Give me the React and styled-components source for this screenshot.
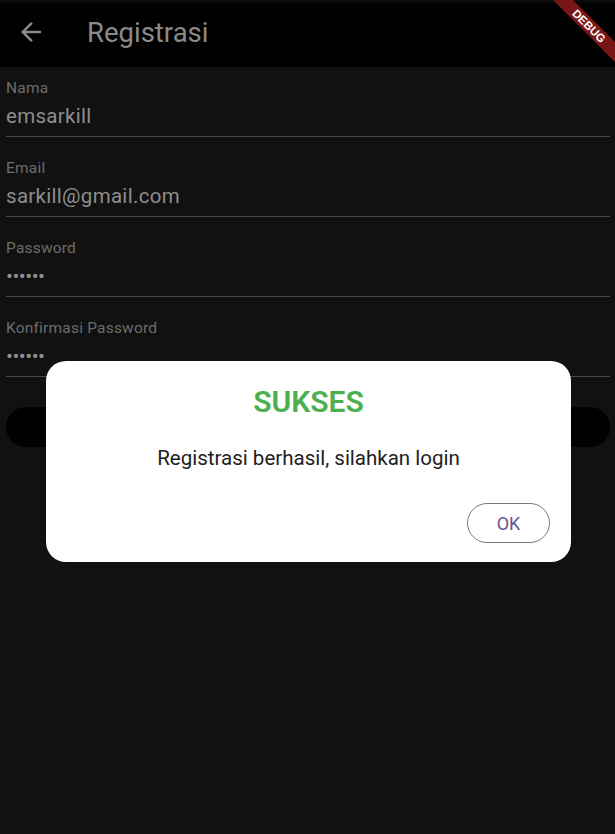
import React from "react";
import styled, { createGlobalStyle } from "styled-components";

const GlobalStyle = createGlobalStyle`
  html, body {
    margin: 0;
    padding: 0;
    background: #111111;
  }
  * {
    box-sizing: border-box;
  }
`;

const Screen = styled.div`
  position: relative;
  width: 615px;
  height: 834px;
  overflow: hidden;
  background: #111111;
  font-family: Roboto, "Liberation Sans", sans-serif;
`;

const AppBar = styled.header`
  display: flex;
  align-items: center;
  height: 67px;
  padding: 0 0 6px 16px;
  background: #010101;
  border-top: 3px solid #0b0b0b;
`;

const BackButton = styled.div`
  display: flex;
  width: 30px;
  height: 30px;
  color: #8a8a8a;
`;

const Title = styled.h1`
  margin: 0 0 0 41px;
  font-size: 27.5px;
  font-weight: 400;
  color: #8a8a8a;
`;

const Form = styled.div`
  display: flex;
  flex-direction: column;
  padding: 12px 5px 0 6px;
`;

const Field = styled.div`
  display: flex;
  flex-direction: column;
  margin-bottom: 22px;
`;

const Label = styled.div`
  font-size: 15.5px;
  line-height: 18px;
  letter-spacing: 0.2px;
  color: #6c6c6c;
`;

const Value = styled.div`
  margin-top: 7px;
  height: 33px;
  padding-bottom: 8px;
  font-size: 20.5px;
  line-height: 24px;
  letter-spacing: ${(p) => (p.$secret ? "-0.5px" : "0.3px")};
  color: #8e8e8e;
  border-bottom: 1px solid #4a4a4a;
`;

const SubmitButton = styled.div`
  height: 40px;
  margin-top: 8px;
  border-radius: 20px;
  background: #010101;
`;

const Dialog = styled.div`
  position: absolute;
  left: 46px;
  top: 361px;
  width: 525px;
  height: 201px;
  display: flex;
  flex-direction: column;
  align-items: center;
  padding: 22px 21px 0;
  background: #ffffff;
  border-radius: 20px;
`;

const DialogTitle = styled.div`
  font-size: 30px;
  font-weight: 600;
  line-height: 38px;
  color: #4caf50;
`;

const DialogMessage = styled.div`
  margin-top: 24px;
  font-size: 20.5px;
  line-height: 26px;
  color: #222222;
`;

const Actions = styled.div`
  display: flex;
  justify-content: flex-end;
  width: 100%;
  margin-top: 32px;
`;

const OutlineButton = styled.div`
  display: flex;
  align-items: center;
  justify-content: center;
  width: 83px;
  height: 40px;
  border: 1px solid #7b767f;
  border-radius: 20px;
  font-size: 18px;
  color: #65558f;
`;

const DebugBanner = styled.div`
  position: absolute;
  top: 19px;
  right: -24px;
  width: 100px;
  height: 14px;
  transform: rotate(45deg);
  background: #7a1616;
  color: #ffffff;
  font-family: "Liberation Sans", Arial, sans-serif;
  font-size: 11.5px;
  font-weight: 700;
  line-height: 14px;
  text-align: center;
`;

const fields = [
  { label: "Nama", value: "emsarkill" },
  { label: "Email", value: "sarkill@gmail.com" },
  { label: "Password", value: "••••••", secret: true },
  { label: "Konfirmasi Password", value: "••••••", secret: true },
];

const ArrowBack = () => (
  <svg width="30" height="30" viewBox="0 0 24 24" fill="currentColor">
    <path d="M20 11H7.83l5.59-5.59L12 4l-8 8 8 8 1.41-1.41L7.83 13H20v-2z" />
  </svg>
);

export default function App() {
  return (
    <Screen>
      <GlobalStyle />
      <AppBar>
        <BackButton>
          <ArrowBack />
        </BackButton>
        <Title>Registrasi</Title>
      </AppBar>
      <Form>
        {fields.map((f) => (
          <Field key={f.label}>
            <Label>{f.label}</Label>
            <Value $secret={f.secret}>{f.value}</Value>
          </Field>
        ))}
        <SubmitButton />
      </Form>
      <Dialog>
        <DialogTitle>SUKSES</DialogTitle>
        <DialogMessage>Registrasi berhasil, silahkan login</DialogMessage>
        <Actions>
          <OutlineButton>OK</OutlineButton>
        </Actions>
      </Dialog>
      <DebugBanner>DEBUG</DebugBanner>
    </Screen>
  );
}
